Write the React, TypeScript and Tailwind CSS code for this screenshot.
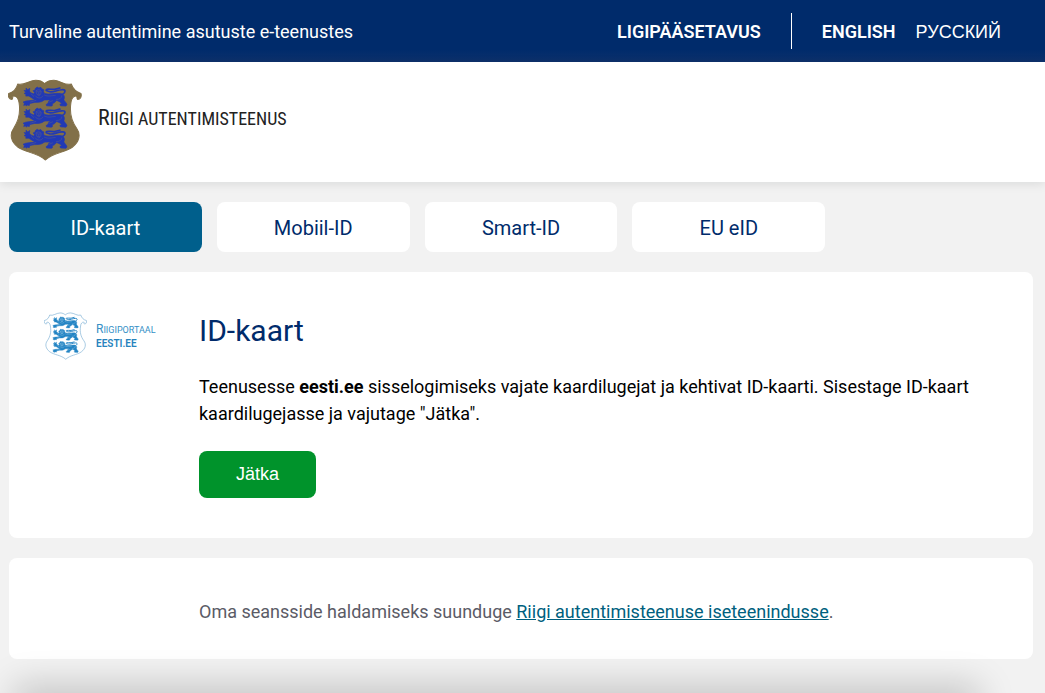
const SHIELD =
  'M54 42C72 48 88 31 108 31C122 31 129 36 134 41C140 36 147 31 162 31C180 31 196 48 214 42C219 56 227 66 243 70C246 80 241 88 233 88C229 86 233 80 229 78C221 77 214 86 213 98C208 130 214 152 230 174C243 192 239 214 217 231C193 248 162 246 137 269C110 246 80 248 55 231C33 214 29 192 42 174C57 152 63 130 58 98C56 86 49 77 41 78C37 80 41 86 37 88C29 88 24 80 27 70C43 66 50 56 54 42Z';

function Lion({ y, detail }: { y: number; detail: string }) {
  return (
    <g transform={`translate(70 ${y})`}>
      <g fill="currentColor" stroke="currentColor" strokeWidth="2" strokeLinejoin="round">
        <path d="M36 6L42 1L47 4L53 2L57 7L62 9L61 15L64 20C80 25 96 18 112 20C122 22 126 30 122 38C122 44 130 46 131 54L128 58L112 57L110 53L115 50C112 46 106 43 100 41C96 47 90 50 86 51C90 54 88 58 84 58L70 57L69 53L74 50L77 43L84 39C76 40 68 39 63 40C56 47 44 47 34 47L20 50L18 57L14 54L10 58L7 54L2 56L4 49L0 46L8 43C18 41 28 42 35 38C28 36 22 30 17 28L8 28L9 23L3 20L8 17L3 11L9 12L9 4L14 9L20 5L19 13L23 18L32 22L34 17L30 12L36 10Z" />
      </g>
      <path d="M118 23C128 17 128 8 116 9C100 10 92 17 80 15C70 13 66 11 71 8C78 6 84 9 94 8L110 4" fill="none" stroke="currentColor" strokeWidth="5" strokeLinecap="round" />
      <g fill="none" stroke={detail} strokeWidth="1.5" strokeLinecap="round">
        <path d="M39 12C42 8 51 8 54 13C54 21 51 26 47 27C41 25 39 19 39 12" />
        <path d="M42 15h3M49 15h3M47 16v5M44 23h6" />
        <path d="M36 27C43 36 54 36 59 28M64 25C76 31 85 26 96 26M100 38C110 38 115 34 116 27M78 46L88 42M24 22L32 29M22 46L38 41" />
      </g>
    </g>
  );
}

function Emblem({ className, fill, outline, detail }: { className: string; fill: string; outline: string; detail: string }) {
  return (
    <svg viewBox="25 27 221 245" className={className} aria-hidden="true">
      <path d={SHIELD} fill={fill} stroke={outline} strokeWidth="3" strokeLinejoin="round" />
      <Lion y={50} detail={detail} />
      <Lion y={113} detail={detail} />
      <Lion y={176} detail={detail} />
    </svg>
  );
}

const TABS = ['ID-kaart', 'Mobiil-ID', 'Smart-ID', 'EU eID'];

export default function App() {
  return (
    <div className="relative min-h-screen overflow-hidden bg-[#f2f2f2] font-['Roboto',sans-serif] text-lg text-black">
      <div className="flex h-[62px] items-center justify-between bg-gradient-to-b from-[#002b6b] from-80% to-[#0e316c] pr-11 pl-[9px] text-white">
        <p className="pt-0.5">Turvaline autentimine asutuste e-teenustes</p>
        <nav className="flex items-center">
          <a href="#accessibility" className="pt-0.5 font-semibold">LIGIPÄÄSETAVUS</a>
          <span className="mx-[30px] h-9 w-px bg-white" />
          <a href="#en" lang="en" className="mr-5 pt-0.5 font-semibold">ENGLISH</a>
          <a href="#ru" lang="ru" className="pt-0.5 font-['Liberation_Sans',sans-serif]">РУССКИЙ</a>
        </nav>
      </div>

      <header className="relative flex h-[120px] items-center bg-white pb-1 pl-2 shadow-[0_2px_10px_rgba(0,20,20,0.1)]">
        <a href="#home" className="flex items-center gap-4">
          <Emblem className="h-[82px] w-[74px] text-[#2139b5]" fill="#827049" outline="#827049" detail="#5c5f86" />
          <span className="pb-1 font-['Roboto_Condensed','Roboto',sans-serif] text-[22px] leading-7 text-[#222]">
            R<span className="text-lg">IIGI AUTENTIMISTEENUS</span>
          </span>
        </a>
      </header>

      <main className="pt-5 pr-3 pl-[9px]">
        <div role="tablist" className="grid grid-cols-5 gap-[15px] text-xl">
          {TABS.map((tab, i) => (
            <button
              key={tab}
              type="button"
              role="tab"
              aria-selected={i === 0}
              className={i === 0 ? 'h-[50px] rounded-lg bg-[#005f8c] pt-0.5 text-white' : 'h-[50px] rounded-lg bg-white pt-0.5 text-[#002b6b]'}
            >
              {tab}
            </button>
          ))}
        </div>

        <section className="mt-5 flex rounded-lg bg-white px-[35px] pt-10 pb-10">
          <div className="flex h-12 w-[155px] shrink-0 items-center gap-[9px]">
            <Emblem className="h-12 w-[43px] text-[#2384c4]" fill="#ffffff" outline="#6ba6cf" detail="#b5d7ec" />
            <p className="text-[10px] leading-[14px] text-[#3590c6]">
              <span className="block text-[9px]">
                <span className="text-xs leading-[14px]">R</span>IIGIPORTAAL
              </span>
              <span className="block font-semibold text-[#2682bd]">EESTI.EE</span>
            </p>
          </div>
          <div className="min-w-0">
            <h1 className="text-[30px] leading-[38px] text-[#002b6b]">ID-kaart</h1>
            <p className="mt-[23px] leading-[27px]">
              Teenusesse <strong>eesti.ee</strong> sisselogimiseks vajate kaardilugejat ja kehtivat ID-kaarti. Sisestage ID-kaart kaardilugejasse ja vajutage "Jätka".
            </p>
            <button type="button" className="mt-6 h-[47px] w-[117px] rounded-lg bg-[#00932b] pb-0.5 font-['Liberation_Sans',sans-serif] text-white">
              Jätka
            </button>
          </div>
        </section>

        <section className="mt-5 rounded-lg bg-white pt-[43px] pr-[35px] pb-[37px] pl-[190px] leading-[21px] text-[#5b5b66]">
          Oma seansside haldamiseks suunduge{' '}
          <a href="#self-service" className="text-[#005f7e] underline">Riigi autentimisteenuse iseteenindusse</a>.
        </section>
      </main>

      <div className="pointer-events-none absolute inset-x-0 -bottom-5 mr-[72px] ml-5 h-5 shadow-[0_0_36px_6px_rgba(0,0,0,0.22)]" />
    </div>
  );
}
